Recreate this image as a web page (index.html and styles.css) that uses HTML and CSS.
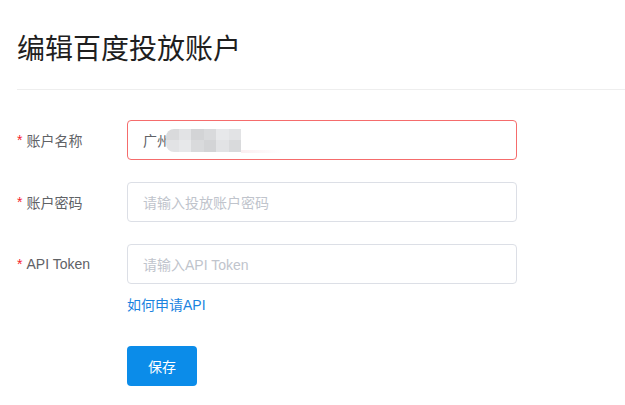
FILE: index.html
```html
<!DOCTYPE html>
<html>
<head>
<meta charset="utf-8">
<link rel="stylesheet" href="styles.css">
</head>
<body>
<div class="page">
  <h1 class="title">编辑百度投放账户</h1>
  <div class="divider"></div>
  <form class="form">
    <div class="row">
      <label class="label"><span class="star">*</span>账户名称</label>
      <div class="input input-error">
        <span class="value">广州</span>
        <span class="mosaic">
          <i class="c1"></i><i class="c2"></i><i class="c3"></i><i class="c1"></i><i class="c4"></i><i class="c2"></i>
          <i class="c2"></i><i class="c4"></i><i class="c1"></i><i class="c3"></i><i class="c2"></i><i class="c1"></i>
        </span>
        <span class="tail"></span>
      </div>
    </div>
    <div class="row">
      <label class="label"><span class="star">*</span>账户密码</label>
      <div class="input"><span class="ph">请输入投放账户密码</span></div>
    </div>
    <div class="row row-last">
      <label class="label"><span class="star">*</span>API Token</label>
      <div class="input"><span class="ph">请输入API Token</span></div>
    </div>
    <div class="help"><a class="link">如何申请API</a></div>
    <div class="actions"><button type="button" class="btn">保存</button></div>
  </form>
</div>
</body>
</html>
```
FILE: styles.css
```css
html, body {
  margin: 0;
  padding: 0;
  background: #fff;
}
.page {
  padding: 30px 0 0 17px;
  font-family: "Liberation Sans", "Noto Sans CJK SC", sans-serif;
}
.title {
  margin: 0;
  font-size: 28px;
  line-height: 40px;
  font-weight: normal;
  color: #1f1f1f;
}
.divider {
  height: 1px;
  background: #eeeeee;
  margin-top: 19px;
}
.form {
  margin-top: 30px;
}
.row {
  display: flex;
  align-items: center;
  height: 40px;
  margin-bottom: 22px;
}
.row-last {
  margin-bottom: 0;
}
.label {
  width: 110px;
  font-size: 14px;
  color: #606266;
  display: flex;
  align-items: center;
}
.star {
  color: #f5222d;
  margin-right: 4px;
  font-size: 14px;
}
.input {
  box-sizing: border-box;
  width: 390px;
  height: 40px;
  border: 1px solid #dcdfe6;
  border-radius: 4px;
  display: flex;
  align-items: center;
  padding-left: 15px;
  font-size: 14px;
}
.input-error {
  border-color: #f56c6c;
}
.value {
  color: #606266;
}
.ph {
  color: #c0c4cc;
}
.mosaic {
  display: grid;
  grid-template-columns: repeat(6, 12.5px);
  grid-template-rows: 11px 12px;
  margin-left: -5px;
  border-radius: 8px 0 0 8px;
  overflow: hidden;
}
.mosaic i {
  display: block;
}
.c1 { background: #d9dadc; }
.c2 { background: #e2e3e5; }
.c3 { background: #d3d4d6; }
.c4 { background: #e7e8ea; }
.tail {
  align-self: flex-end;
  margin-bottom: 6px;
  width: 41px;
  height: 3px;
  background: linear-gradient(to right, #fbeef0, #fff);
}
.help {
  padding-left: 110px;
  margin-top: 10px;
  height: 22px;
  line-height: 22px;
}
.link {
  font-size: 14px;
  color: #1b83df;
  text-decoration: none;
}
.actions {
  padding-left: 110px;
  margin-top: 30px;
}
.btn {
  width: 70px;
  height: 40px;
  border: none;
  border-radius: 4px;
  background: #0b8ce9;
  color: #fff;
  font-size: 14px;
  font-family: "Liberation Sans", "Noto Sans CJK SC", sans-serif;
  padding: 0;
}
```
